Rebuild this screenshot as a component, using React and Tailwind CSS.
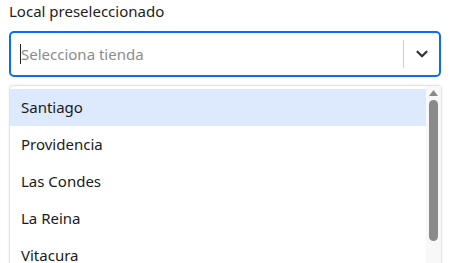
import { ChevronDown } from "lucide-react";

const stores = ["Santiago", "Providencia", "Las Condes", "La Reina", "Vitacura"];

export default function App() {
    return (
        <div className="w-[468px] h-[263px] overflow-hidden bg-white font-['Noto_Sans',sans-serif] text-[#1a1a1a]">
            <div className="px-[9px] pt-[1px]">
                <label className="block text-[15px] leading-[21px] text-[#222]">
                    Local preseleccionado
                </label>
                <div className="mt-[9px] flex items-center h-[46px] w-[432px] rounded-[5px] border-2 border-[#0a6cf5]">
                    <div className="flex-1 flex items-center pl-[9px]">
                        <span className="w-px h-[20px] bg-[#222]"></span>
                        <span className="text-[15px] text-[#8c8c8c]">Selecciona tienda</span>
                    </div>
                    <span className="w-px h-[28px] bg-[#cfcfcf]"></span>
                    <div className="w-[35px] flex justify-center">
                        <ChevronDown size={18} strokeWidth={3} className="text-[#333]" />
                    </div>
                </div>
                <div className="mt-[8px] flex w-[433px] h-[200px] rounded-t-[4px] border border-[#e4e4e4] shadow-[0_0_3px_rgba(0,0,0,0.08)]">
                    <ul className="flex-1 pt-[3px]">
                        {stores.map((s, i) => (
                            <li
                                key={s}
                                className={
                                    i === 0
                                        ? "h-[37px] flex items-center pl-[11px] text-[15px] bg-[#dde9fc]"
                                        : "h-[37px] flex items-center pl-[11px] text-[15px]"
                                }
                            >
                                {s}
                            </li>
                        ))}
                    </ul>
                    <div className="w-[15px] bg-[#f8f8f8] flex flex-col items-center pt-[4px]">
                        <svg width="9" height="6" viewBox="0 0 9 6">
                            <polygon points="4.5,0 9,6 0,6" fill="#8a8a8a" />
                        </svg>
                        <div className="mt-[4px] w-[9px] h-[141px] rounded-full bg-[#8a8a8a]"></div>
                    </div>
                </div>
            </div>
        </div>
    );
}
